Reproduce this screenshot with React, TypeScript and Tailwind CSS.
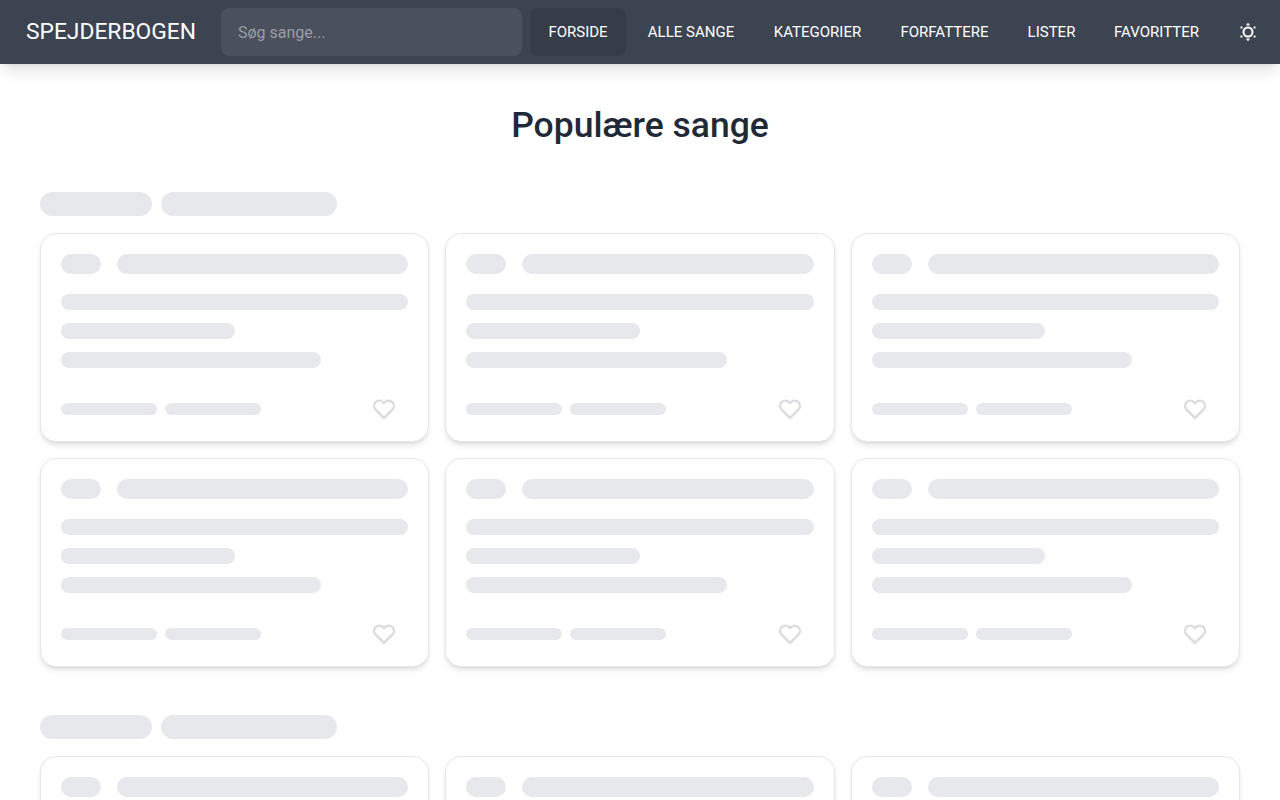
import React from "react";

const navItems = [
  { label: "FORSIDE", width: "w-[96px]" },
  { label: "ALLE SANGE", width: "w-[122px]" },
  { label: "KATEGORIER", width: "w-[123px]" },
  { label: "FORFATTERE", width: "w-[123px]" },
  { label: "LISTER", width: "w-[83px]" },
  { label: "FAVORITTER", width: "w-[119px]" },
];

const Bar = ({ className }: { className: string }) => (
  <div className={`rounded-full bg-[#e7e8ec] ${className}`}></div>
);

const SongCard = () => (
  <div className="h-[209px] rounded-2xl border border-[#e5e7eb] bg-white px-5 pt-5 shadow-md">
    <div className="flex gap-4">
      <Bar className="h-5 w-10 shrink-0" />
      <Bar className="h-5 grow" />
    </div>
    <Bar className="mt-5 h-4 w-full" />
    <Bar className="mt-[13px] h-4 w-1/2" />
    <Bar className="mt-[13px] h-4 w-3/4" />
    <div className="mt-[29px] flex items-center gap-2">
      <Bar className="h-3 w-24" />
      <Bar className="h-3 w-24" />
      <svg
        className="ml-auto mr-[12px]"
        width="24"
        height="24"
        viewBox="0 0 24 24"
        fill="none"
        stroke="#dcdde0"
        strokeWidth="2.5"
        strokeLinejoin="round"
      >
        <path d="M12 21 L3.6 12.6 A5.2 5.2 0 0 1 11 5.2 L12 6.2 L13 5.2 A5.2 5.2 0 0 1 20.4 12.6 Z" />
      </svg>
    </div>
  </div>
);

const SongSection = () => (
  <section>
    <div className="flex gap-[9px]">
      <Bar className="h-6 w-28" />
      <Bar className="h-6 w-44" />
    </div>
    <div className="mt-[17px] grid grid-cols-3 gap-4">
      {[0, 1, 2, 3, 4, 5].map((i) => (
        <SongCard key={i} />
      ))}
    </div>
  </section>
);

const App = () => {
  return (
    <div className="h-screen overflow-hidden bg-white font-['Roboto',sans-serif]">
      <header className="relative z-10 flex h-16 items-center bg-[#3d4451] pl-[26px] pr-[16px] text-white shadow-lg">
        <div className="w-[195px] shrink-0 text-[22.8px] leading-none">SPEJDERBOGEN</div>
        <input
          className="h-12 w-[301px] shrink-0 rounded-lg bg-[#4a505c] px-[17px] text-base outline-none placeholder:text-[#9a9ea6]"
          placeholder="Søg sange..."
        />
        <nav className="ml-2 flex items-center gap-1">
          {navItems.map((item, i) => (
            <a
              key={item.label}
              className={`flex h-12 items-center justify-center rounded-lg text-[15px] ${item.width} ${i === 0 ? "bg-[#363c48]" : ""}`}
            >
              {item.label}
            </a>
          ))}
        </nav>
        <div className="ml-auto flex h-12 w-8 items-center justify-center">
          <svg width="20" height="20" viewBox="0 0 20 20" fill="none" stroke="white">
            <circle cx="10" cy="10" r="4.5" strokeWidth="2" />
            <path d="M10 1 L11.5 3.2 H8.5 Z M10 19 L11.5 16.8 H8.5 Z" fill="white" strokeWidth="0.5" />
            <path d="M2.5 5.5 H3.5 V6.5 M17.5 5.5 H16.5 V6.5 M2.5 14.5 H3.5 V13.5 M17.5 14.5 H16.5 V13.5" strokeWidth="1.8" />
          </svg>
        </div>
      </header>
      <main className="px-10">
        <h1 className="mt-[39px] text-center text-[35.5px] font-medium leading-[44px] text-[#1f2937]">
          Populære sange
        </h1>
        <div className="mt-[45px] flex flex-col gap-12">
          <SongSection />
          <SongSection />
        </div>
      </main>
    </div>
  );
};

export default App;
